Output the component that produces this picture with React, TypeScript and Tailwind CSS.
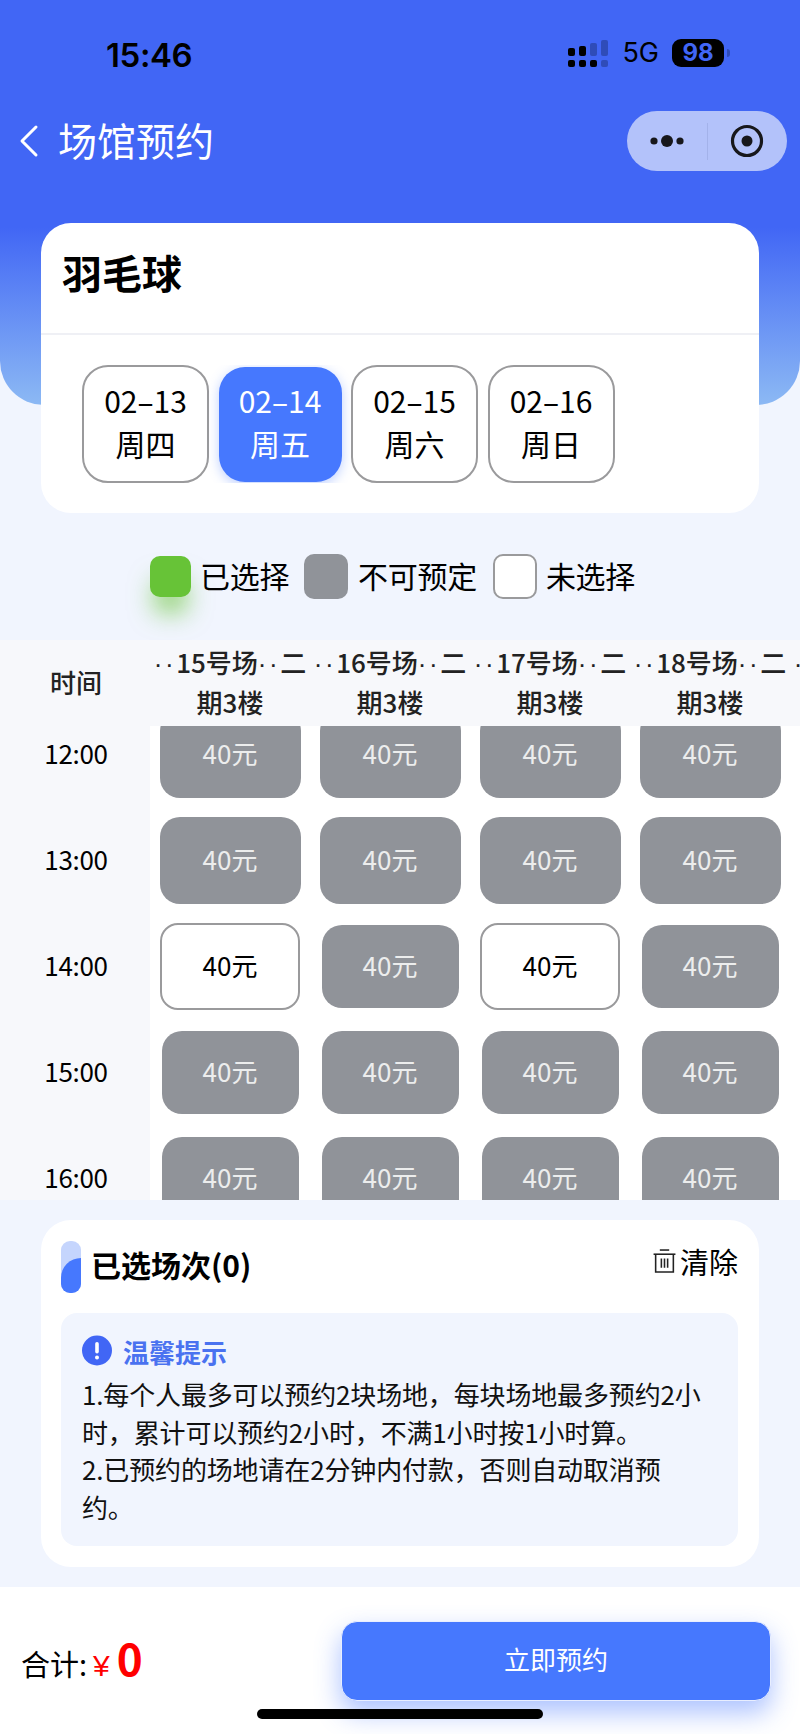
import React from "react";

const dates = [
  { d: "02-13", w: "周四", active: false },
  { d: "02-14", w: "周五", active: true },
  { d: "02-15", w: "周六", active: false },
  { d: "02-16", w: "周日", active: false },
];

type Kind = "big" | "small" | "free";
const rows: { t: string; cells: Kind[] }[] = [
  { t: "12:00", cells: ["big", "big", "big", "big"] },
  { t: "13:00", cells: ["big", "big", "big", "big"] },
  { t: "14:00", cells: ["free", "small", "free", "small"] },
  { t: "15:00", cells: ["small", "small", "small", "small"] },
  { t: "16:00", cells: ["small", "small", "small", "small"] },
];

function SignalIcon() {
  return (
    <svg width="40" height="28" viewBox="0 0 40 28">
      <g fill="#000">
        <rect x="0" y="9" width="7" height="8" rx="2" />
        <rect x="11" y="7" width="7" height="10" rx="2" />
        <rect x="0" y="21" width="7" height="7" rx="2" />
        <rect x="11" y="21" width="7" height="7" rx="2" />
        <rect x="22" y="21" width="7" height="7" rx="2" />
      </g>
      <g fill="#2f4cb8">
        <rect x="22" y="4" width="7" height="13" rx="2" />
        <rect x="33" y="1" width="7" height="16" rx="2" />
        <rect x="33" y="21" width="7" height="7" rx="2" />
      </g>
    </svg>
  );
}

function Slot({ kind }: { kind: Kind }) {
  if (kind === "free") {
    return (
      <div className="flex h-[87px] w-[140px] items-center justify-center rounded-[18px] border-2 border-[#9a9a9c] bg-white pb-[3px] text-black">
        40元
      </div>
    );
  }
  return (
    <div
      className={
        kind === "big"
          ? "flex h-[87px] w-[141px] items-center justify-center rounded-[20px] bg-[#909399] pb-[3px] text-[#eceded]"
          : "flex h-[83px] w-[137px] items-center justify-center rounded-[20px] bg-[#909399] pb-[3px] text-[#eceded]"
      }
    >
      40元
    </div>
  );
}

function Dots() {
  return <span className="font-['Liberation_Sans',sans-serif] tracking-[2.5px]">··</span>;
}

function HeadCol({ n }: { n: number }) {
  return (
    <div className="flex flex-col items-center whitespace-nowrap pb-[3px] text-[26px] font-medium leading-[37px] text-[#222]">
      <span>
        <Dots />
        {n}号场
        <Dots />二
      </span>
      <span>期3楼</span>
    </div>
  );
}

export default function App() {
  return (
    <div className="flex h-[1734px] w-[800px] flex-col overflow-hidden bg-[#f1f5fe] font-['Noto_Sans_CJK_SC','Noto_Sans',sans-serif] text-black">
      {/* Blue header */}
      <div className="h-[405px] shrink-0 rounded-b-[44px] bg-[linear-gradient(180deg,#4166f5_0%,#4166f5_56%,#8cb9f4_100%)]">
        <div className="flex h-[68px] items-end">
          <span className="-mb-[6px] ml-[106px] font-['Inter',sans-serif] text-[33px] font-semibold leading-[38px] tracking-[-0.4px] text-black">15:46</span>
          <div className="mb-[1px] ml-auto mr-[70px] flex items-center">
            <SignalIcon />
            <span className="ml-[14px] font-['Inter',sans-serif] text-[27px] leading-[28px]">5G</span>
            <div className="ml-[13px] flex h-[28px] w-[52px] items-center justify-center rounded-[9px] bg-black font-['Inter',sans-serif] text-[24px] font-bold leading-none text-[#4166f5]">
              98
            </div>
            <div className="ml-[3px] h-[8px] w-[3px] rounded-r-full bg-[#2f4cb8]" />
          </div>
        </div>
        <div className="mt-[43px] flex h-[60px] items-center">
          <svg className="ml-[18px]" width="22" height="34" viewBox="0 0 22 34" fill="none">
            <path d="M18 3 L4 17 L18 31" stroke="#fff" strokeWidth="3" strokeLinecap="round" strokeLinejoin="round" />
          </svg>
          <span className="ml-[18px] pb-[4px] text-[39px] leading-[50px] text-white">场馆预约</span>
          <div className="ml-auto mr-[13px] flex h-[60px] w-[160px] items-center rounded-full bg-[#b3c2fa]">
            <svg className="ml-[23px]" width="34" height="14" viewBox="0 0 34 14">
              <circle cx="4" cy="7" r="3.6" fill="#17171b" />
              <circle cx="17" cy="7" r="6" fill="#17171b" />
              <circle cx="30" cy="7" r="3.6" fill="#17171b" />
            </svg>
            <div className="ml-[23px] h-[37px] w-px bg-[#a3b2ea]" />
            <svg className="ml-[22px]" width="34" height="34" viewBox="0 0 34 34" fill="none">
              <circle cx="17" cy="17" r="14.5" stroke="#17171b" strokeWidth="3.2" />
              <circle cx="17" cy="17" r="5.5" fill="#17171b" />
            </svg>
          </div>
        </div>
      </div>

      {/* Sport & dates */}
      <div className="mx-[41px] -mt-[182px] h-[290px] shrink-0 rounded-[30px] bg-white">
        <div className="flex h-[112px] items-center border-b-2 border-[#eff0f5] pb-[12px] pl-[21px] text-[40px] font-bold leading-[50px]">
          羽毛球
        </div>
        <div className="mt-[30px] flex h-[118px] items-center gap-[9.5px] overflow-hidden pl-[41px]">
          {dates.map((x) => (
            <div
              key={x.d}
              className={
                x.active
                  ? "flex h-[115px] w-[123px] flex-col items-center justify-center rounded-[26px] bg-[#4678fe] pb-[4px] text-[30px] leading-[43px] text-white shadow-[0_3px_12px_rgba(70,120,254,0.35)]"
                  : "flex h-[118px] w-[127px] flex-col items-center justify-center rounded-[26px] border-2 border-[#9a9a9c] bg-white pb-[4px] text-[30px] leading-[43px]"
              }
            >
              <span>{x.d.replace("-", "–")}</span>
              <span>{x.w}</span>
            </div>
          ))}
        </div>
      </div>

      {/* Legend */}
      <div className="flex h-[127px] shrink-0 items-center pl-[150px] text-[30px] leading-[44px] tracking-[-0.3px]">
        <div className="h-[41px] w-[41px] rounded-[10px] bg-[#67c337] shadow-[0_20px_24px_-4px_rgba(103,195,55,0.65)]" />
        <span className="mb-[4px] ml-[9px]">已选择</span>
        <div className="ml-[15px] h-[45px] w-[44px] rounded-[10px] bg-[#909399]" />
        <span className="mb-[4px] ml-[10px]">不可预定</span>
        <div className="ml-[16px] h-[45px] w-[44px] rounded-[10px] border-2 border-[#9a9a9c] bg-white" />
        <span className="mb-[4px] ml-[9px]">未选择</span>
      </div>

      {/* Table */}
      <div className="h-[560px] shrink-0 overflow-hidden bg-white text-[26px]">
        <div className="grid h-[86px] w-[950px] grid-cols-[150px_repeat(5,160px)] items-center bg-[#f7f8fb]">
          <div className="pb-[4px] pl-[50px] font-medium text-[#222]">时间</div>
          {[15, 16, 17, 18, 19].map((n) => (
            <HeadCol key={n} n={n} />
          ))}
        </div>
        <div className="h-[474px] overflow-hidden">
          <div className="-mt-[25px]">
            {rows.map((r) => (
              <div key={r.t} className="grid h-[106px] grid-cols-[150px_repeat(4,160px)] items-center">
                <div className="flex h-full items-center justify-center bg-[#f7f8fb] pb-[4px] pl-[2px] tracking-[-0.3px]">{r.t}</div>
                {r.cells.map((c, i) => (
                  <div key={i} className="flex justify-center">
                    <Slot kind={c} />
                  </div>
                ))}
              </div>
            ))}
          </div>
        </div>
      </div>

      {/* Selected */}
      <div className="shrink-0 px-[41px] py-[20px]">
        <div className="h-[347px] rounded-[30px] bg-white pl-[20px] pr-[21px] pt-[21px]">
          <div className="flex h-[52px] justify-between">
            <div className="flex items-center">
              <div className="relative h-[52px] w-[20px] overflow-hidden rounded-[9px] bg-[#c5d5fd]">
                <div className="absolute bottom-0 left-0 h-[35px] w-[20px] rounded-tl-[20px] bg-[#4678fe]" />
              </div>
              <span className="mb-[6px] ml-[10px] text-[30px] font-semibold leading-[40px]">已选场次(0)</span>
            </div>
            <div className="flex h-[40px] items-center">
              <svg width="25" height="25" viewBox="0 0 23 24" fill="none" stroke="#222" strokeWidth="1.5">
                <path d="M3 5 V22 H20 V5" />
                <path d="M1 5 H22" />
                <path d="M7 1 H16" />
                <path d="M8.5 9 V18 M11.5 9 V18 M14.5 9 V18" />
              </svg>
              <span className="ml-[3px] text-[29px] leading-[40px]">清除</span>
            </div>
          </div>
          <div className="mt-[20px] h-[233px] rounded-[16px] bg-[#f1f5fe] pl-[21px] pr-[30px] pt-[21px]">
            <div className="flex h-[32px] items-center">
              <svg width="30" height="31" viewBox="0 0 30 31">
                <circle cx="15" cy="15.5" r="15" fill="#4166f5" />
                <rect x="13.2" y="7" width="3.6" height="11.5" rx="1.8" fill="#fff" />
                <circle cx="15" cy="22.5" r="2" fill="#fff" />
              </svg>
              <span className="-mb-[4px] ml-[11px] text-[26px] font-bold leading-[38px] text-[#4a72f0]">温馨提示</span>
            </div>
            <p className="mt-[9px] text-[26px] leading-[37.5px] tracking-[-0.15px] text-[#111]">
              1.每个人最多可以预约2块场地，每块场地最多预约2小时，累计可以预约2小时，不满1小时按1小时算。
              <br />
              2.已预约的场地请在2分钟内付款，否则自动取消预约。
            </p>
          </div>
        </div>
      </div>

      {/* Bottom bar */}
      <div className="relative flex-1 bg-white pl-[21px] pr-[29px] pt-[34px]">
        <div className="flex items-start justify-between">
          <div className="mt-[11px] flex items-baseline">
            <span className="text-[29px] leading-[50px]">合计:</span>
            <span className="ml-[6px] font-['Liberation_Sans',sans-serif] text-[30px] leading-[50px] text-[#ff0000]">¥</span>
            <span className="ml-[7px] text-[44px] font-semibold leading-[50px] text-[#ff0000]">0</span>
          </div>
          <div className="flex h-[80px] w-[430px] items-center justify-center rounded-[16px] border border-[#e8eeff] bg-[#4678fe] pb-[5px] text-[26px] text-white shadow-[0_12px_26px_rgba(70,120,254,0.45)]">
            立即预约
          </div>
        </div>
        <div className="absolute bottom-[15px] left-[257px] h-[10px] w-[286px] rounded-full bg-black" />
      </div>
    </div>
  );
}
